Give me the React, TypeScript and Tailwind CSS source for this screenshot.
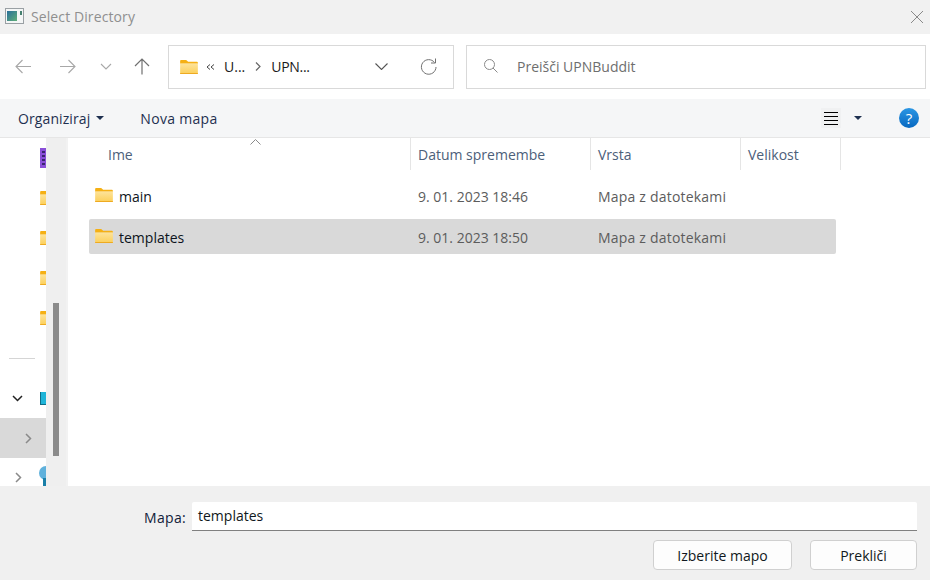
import React from "react";

const Folder = ({ w = 18, h = 14 }: { w?: number; h?: number }) => (
  <svg width={w} height={h} viewBox="0 0 19 15" className="shrink-0">
    <defs>
      <linearGradient id="fb" x1="0" y1="0" x2="0" y2="1">
        <stop offset="0" stopColor="#fde39a" />
        <stop offset="1" stopColor="#fccf58" />
      </linearGradient>
    </defs>
    <path d="M0 1.200C0 .5.5 0 1.200 0h4.600c.4 0 .7.1 1 .4L8.600 2H18c.6 0 1 .4 1 1v1H0z" fill="#f5b014" />
    <path d="M0 3.800h19V13.800c0 .7-.5 1.200-1.200 1.200H1.200C.5 15 0 14.500 0 13.800z" fill="url(#fb)" />
    <rect x="0" y="14" width="19" height="1" fill="#eda81d" />
  </svg>
);

const SideClip = ({ children, h = "h-10" }: { children?: React.ReactNode; h?: string }) => (
  <div className={"flex items-center justify-end overflow-hidden shrink-0 " + h}>{children}</div>
);

const Clip = () => (
  <div className="w-[6px] h-[14px] overflow-hidden">
    <Folder />
  </div>
);

const Row = ({ name, date, selected }: { name: string; date: string; selected?: boolean }) => (
  <div className={"flex items-center h-[35px] w-[747px] ml-[21px] rounded-[2px] " + (selected ? "bg-[#d9d9d9]" : "")}>
    <div className="w-[329px] flex items-center pl-[6px] gap-[6px] text-[#0d1420]">
      <div className="-mt-[1px]"><Folder /></div>
      <span className="pt-[1px]">{name}</span>
    </div>
    <div className="w-[180px] text-[#5c5c5c] pt-[1px]">{date}</div>
    <div className="text-[#5c5c5c] pt-[1px] tracking-[0.2px]">Mapa z datotekami</div>
  </div>
);

const HeaderCell = ({ w, label }: { w: string; label: string }) => (
  <div className={"h-full flex items-center pl-[7px] border-r border-[#e5e5e5] text-[#4c607a] shrink-0 " + w}>{label}</div>
);

export default function App() {
  return (
    <div className="w-[930px] h-[580px] flex flex-col overflow-hidden bg-white text-[14px] font-['Open_Sans','Liberation_Sans',sans-serif]">
      {/* Title bar */}
      <div className="h-[34px] shrink-0 bg-[#f1f1f1] flex items-center pl-[5px] pr-[5px]">
        <svg width="19" height="16" viewBox="0 0 19 16" className="shrink-0 -mt-[3px]">
          <defs>
            <linearGradient id="ti" x1="0" y1="0" x2="1" y2="1">
              <stop offset="0" stopColor="#2a6f9a" />
              <stop offset="1" stopColor="#5fae78" />
            </linearGradient>
          </defs>
          <rect x="0.5" y="0.5" width="18" height="15" fill="#f4f6f6" stroke="#9aa0a4" />
          <rect x="2" y="3" width="10" height="10" fill="url(#ti)" />
          <rect x="15" y="3" width="2" height="4" fill="#45806f" />
        </svg>
        <span className="ml-[7px] text-[#8f8f8f] tracking-[0.1px] -mt-[1px]">Select Directory</span>
        <svg width="14" height="14" viewBox="0 0 14 14" className="ml-auto mr-[1px]">
          <path d="M1 1l12 12M13 1L1 13" stroke="#8a8a8a" strokeWidth="1" fill="none" />
        </svg>
      </div>

      {/* Navigation bar */}
      <div className="h-[65px] shrink-0 bg-white flex items-center pl-[15px]">
        <svg width="17" height="15" viewBox="0 0 17 15" className="shrink-0 -mt-[1px]">
          <path d="M16 7.500H1M7.500 1L1 7.500 7.500 14" stroke="#a8a8a8" strokeWidth="1.100" fill="none" />
        </svg>
        <svg width="17" height="15" viewBox="0 0 17 15" className="shrink-0 ml-[27px] -mt-[1px]">
          <path d="M1 7.500h15M9.500 1L16 7.500 9.500 14" stroke="#a8a8a8" strokeWidth="1.100" fill="none" />
        </svg>
        <svg width="12" height="7" viewBox="0 0 12 7" className="shrink-0 ml-[24px] -mt-[1px]">
          <path d="M1 1l5 5 5-5" stroke="#a8a8a8" strokeWidth="1.100" fill="none" />
        </svg>
        <svg width="16" height="17" viewBox="0 0 16 17" className="shrink-0 ml-[22px] -mt-[1px]">
          <path d="M8 16.500V1M1 8l7-7 7 7" stroke="#707070" strokeWidth="1.200" fill="none" />
        </svg>
        <div className="ml-[18px] w-[286px] h-[44px] border border-[#d9d9d9] flex items-center pl-[11px] text-[#1a1a1a] shrink-0">
          <Folder />
          <svg width="9" height="6" viewBox="0 0 9 6" className="ml-[8px] shrink-0">
            <path d="M4 .5L1 3l3 2.500M8 .5L5 3l3 2.500" stroke="#444" strokeWidth="1" fill="none" />
          </svg>
          <span className="ml-[9px]">U...</span>
          <svg width="6" height="9" viewBox="0 0 6 9" className="ml-[10px] shrink-0">
            <path d="M1 .5l4 4-4 4" stroke="#666" strokeWidth="1.200" fill="none" />
          </svg>
          <span className="ml-[10px] tracking-[-0.3px]">UPN...</span>
          <svg width="13" height="7" viewBox="0 0 13 7" className="ml-auto shrink-0">
            <path d="M.5.500l6 6 6-6" stroke="#555" strokeWidth="1.100" fill="none" />
          </svg>
          <svg width="17" height="17" viewBox="0 0 17 17" className="ml-[32px] mr-[16px] shrink-0">
            <path d="M14.500 4.500A7.300 7.300 0 1 0 16 9" stroke="#707070" strokeWidth="1" fill="none" />
            <path d="M15.500 .5v4.500H11" stroke="#707070" strokeWidth="1" fill="none" />
          </svg>
        </div>
        <div className="ml-[12px] w-[460px] h-[44px] border border-[#d9d9d9] flex items-center pl-[17px] text-[#6e6e6e] shrink-0">
          <svg width="14" height="14" viewBox="0 0 14 14" className="shrink-0 -mt-[2px]">
            <circle cx="5.500" cy="5.500" r="5" stroke="#8a8a8a" strokeWidth="1" fill="none" />
            <path d="M9 9l4.500 4.500" stroke="#8a8a8a" strokeWidth="1" fill="none" />
          </svg>
          <span className="ml-[19px]">Preišči UPNBuddit</span>
        </div>
      </div>

      {/* Toolbar */}
      <div className="h-[39px] shrink-0 bg-[#f5f6f7] border-b border-[#e6e6e6] flex items-center pl-[18px] text-[#1e3050]">
        <span className="tracking-[0.1px]">Organiziraj</span>
        <svg width="8" height="4" viewBox="0 0 8 4" className="ml-[6px] shrink-0">
          <path d="M0 0h8L4 4z" fill="#1e3050" />
        </svg>
        <span className="ml-[36px] tracking-[0.3px]">Nova mapa</span>
        <div className="ml-auto w-[20px] h-[20px] bg-[#f0f1f2] flex flex-col items-center justify-center gap-[3px] shrink-0">
          <div className="w-[14px] h-px bg-black" />
          <div className="w-[14px] h-px bg-black" />
          <div className="w-[14px] h-px bg-black" />
          <div className="w-[14px] h-px bg-black" />
        </div>
        <svg width="8" height="4" viewBox="0 0 8 4" className="ml-[13px] shrink-0">
          <path d="M0 0h8L4 4z" fill="#1e3050" />
        </svg>
        <div className="ml-[37px] mr-[11px] w-[20px] h-[20px] rounded-full bg-linear-to-b from-[#2a96e4] to-[#0668c0] text-white flex items-center justify-center text-[15px] leading-none shrink-0">?</div>
      </div>

      {/* Main */}
      <div className="flex-1 min-h-0 flex">
        <div className="w-[46px] shrink-0 flex flex-col">
          <SideClip h="h-[40px]">
            <div className="w-[6px] h-[20px] bg-[#8a4fd8] flex flex-col items-center justify-around py-[2px]">
              <div className="w-[3px] h-[2px] bg-[#3a2470]" />
              <div className="w-[3px] h-[2px] bg-[#3a2470]" />
              <div className="w-[3px] h-[2px] bg-[#3a2470]" />
              <div className="w-[3px] h-[2px] bg-[#3a2470]" />
            </div>
          </SideClip>
          <SideClip h="h-[40px]"><Clip /></SideClip>
          <SideClip h="h-[40px]"><Clip /></SideClip>
          <SideClip h="h-[40px]"><Clip /></SideClip>
          <SideClip h="h-[40px]"><Clip /></SideClip>
          <div className="h-[40px] shrink-0 flex items-center pl-[9px]">
            <div className="w-[26px] h-px bg-[#d5d5d5]" />
          </div>
          <div className="h-[40px] shrink-0 flex items-center justify-between pl-[12px]">
            <svg width="11" height="7" viewBox="0 0 11 7">
              <path d="M1 1l4.500 4.500L10 1" stroke="#222" strokeWidth="1.500" fill="none" />
            </svg>
            <div className="w-[6px] h-[13px] bg-[#1eb4d8] border-l border-b border-[#0e6c86]" />
          </div>
          <div className="h-[40px] shrink-0 bg-[#d9d9d9] flex items-center pl-[25px]">
            <svg width="7" height="11" viewBox="0 0 7 11">
              <path d="M1 1l4.500 4.500L1 10" stroke="#8a8a8a" strokeWidth="1.500" fill="none" />
            </svg>
          </div>
          <div className="h-[28px] shrink-0 flex items-start justify-between pl-[15px] pt-[14px]">
            <svg width="7" height="11" viewBox="0 0 7 11">
              <path d="M1 1l4.500 4.500L1 10" stroke="#8a8a8a" strokeWidth="1.500" fill="none" />
            </svg>
            <svg width="7" height="20" viewBox="0 0 7 20" className="-mt-[6px]">
              <circle cx="7" cy="7" r="7" fill="#5fb1dc" />
              <rect x="4" y="12" width="3" height="8" fill="#1a7fa8" />
            </svg>
          </div>
        </div>
        <div className="w-[20px] shrink-0 bg-[#efefef] pt-[165px] flex justify-center">
          <div className="w-[6px] h-[153px] bg-[#8b8b8b]" />
        </div>
        <div className="flex-1 min-w-0 border-l-2 border-[#f2f2f2] flex flex-col relative">
          <svg width="11" height="6" viewBox="0 0 11 6" className="absolute left-[182px] top-[1px]">
            <path d="M.5 5.500l5-5 5 5" stroke="#8a8a8a" strokeWidth="1" fill="none" />
          </svg>
          <div className="h-[32px] shrink-0 flex items-stretch">
            <div className="w-[343px] h-full flex items-center pl-[40px] border-r border-[#e5e5e5] text-[#4c607a] shrink-0">Ime</div>
            <HeaderCell w="w-[180px]" label="Datum spremembe" />
            <HeaderCell w="w-[150px]" label="Vrsta" />
            <HeaderCell w="w-[100px]" label="Velikost" />
          </div>
          <div className="pt-[8px] flex flex-col gap-[6px]">
            <Row name="main" date="9. 01. 2023 18:46" />
            <Row name="templates" date="9. 01. 2023 18:50" selected />
          </div>
        </div>
      </div>

      {/* Footer */}
      <div className="h-[94px] shrink-0 bg-[#f0f0f0] flex flex-col items-end pt-[16px] pr-[13px] text-[#10203a]">
        <div className="flex items-center">
          <span className="mr-[6px] mt-[2px] tracking-[0.3px]">Mapa:</span>
          <div className="w-[725px] h-[29px] bg-white border-b border-[#808080] pl-[6px] pb-[2px] flex items-center text-[#101820] rounded-t-[2px]">templates</div>
        </div>
        <div className="flex gap-[18px] mt-[9px] text-[#101820]">
          <div className="w-[139px] h-[30px] rounded-[4px] bg-[#fdfdfd] border border-[#d0d0d0] flex items-center justify-center">Izberite mapo</div>
          <div className="w-[107px] h-[30px] rounded-[4px] bg-[#fdfdfd] border border-[#d0d0d0] flex items-center justify-center">Prekliči</div>
        </div>
      </div>
    </div>
  );
}
